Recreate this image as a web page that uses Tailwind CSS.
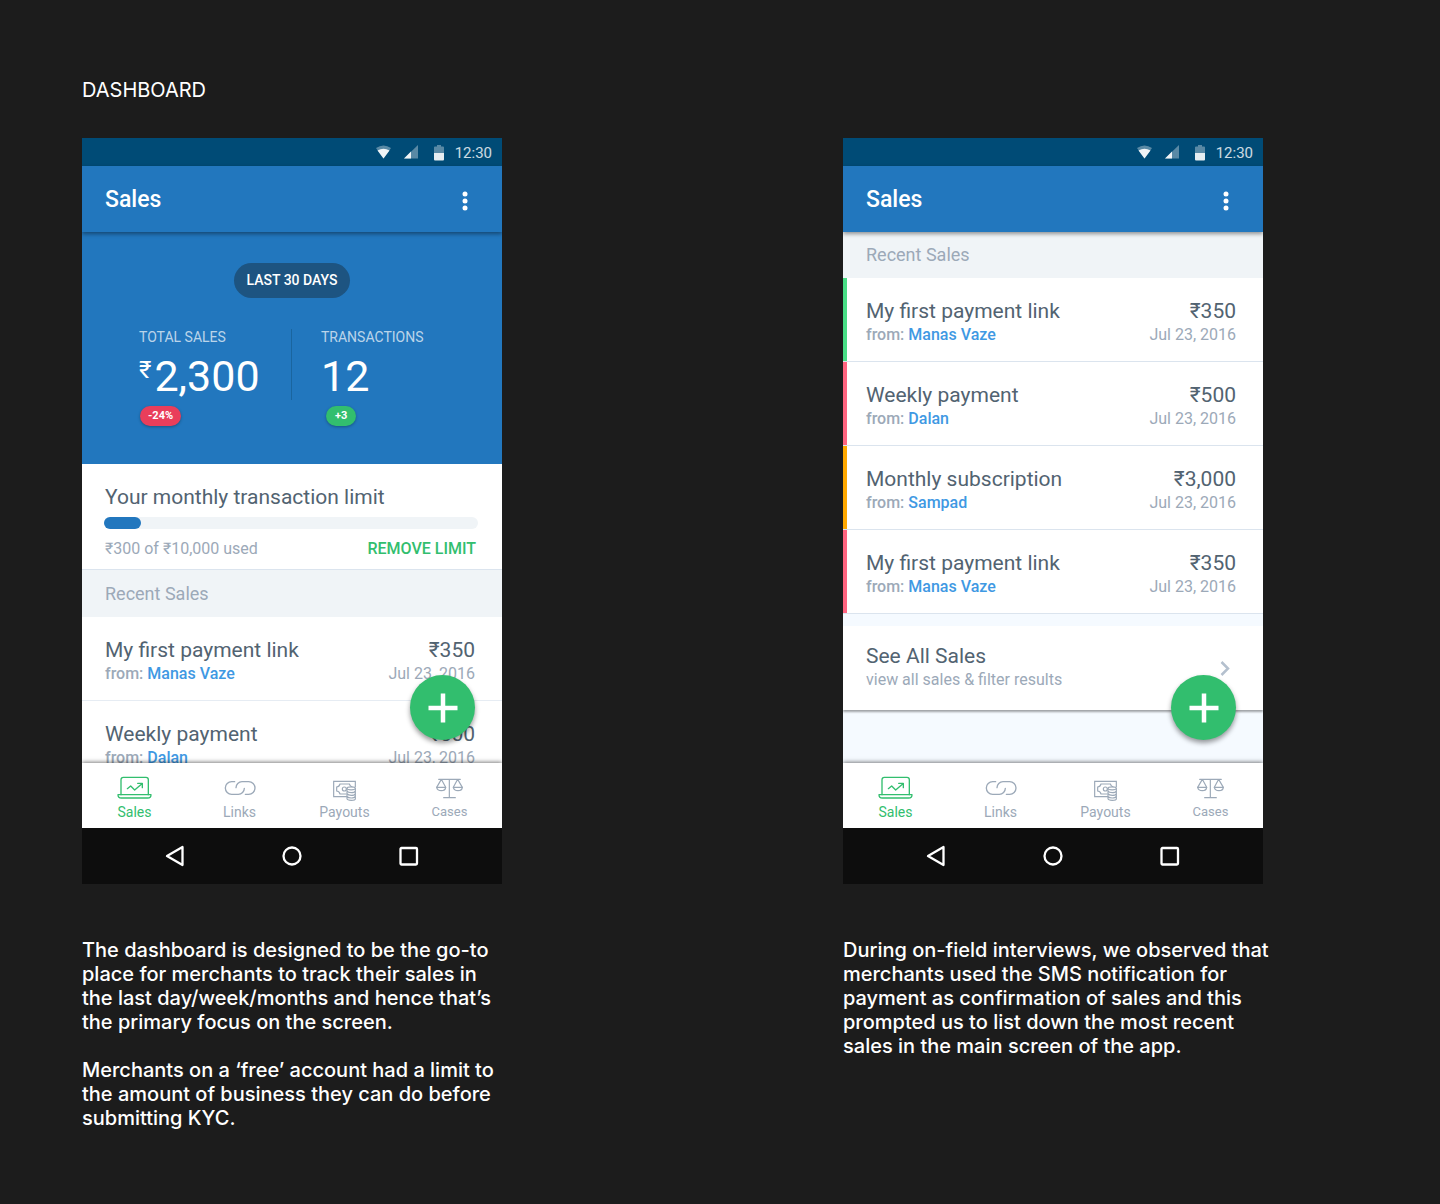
<!DOCTYPE html>
<html lang="en">
<head>
<meta charset="utf-8">
<meta name="viewport" content="width=device-width, initial-scale=1">
<title>Dashboard</title>
<script src="https://cdn.jsdelivr.net/npm/@tailwindcss/browser@4"></script>
</head>
<body class="min-h-screen bg-[#1c1c1c] font-['Inter',sans-serif] text-xl leading-6 text-white">

<svg class="hidden" aria-hidden="true">
  <symbol id="status" viewBox="0 0 60 20">
    <path d="M2 5Q9.500 0 17 5L9.500 15.500Z" fill="#fff" opacity=".35"/>
    <path d="M3.500 7.500Q9.500 4 15.500 7.500L9.500 15.500Z" fill="#fff" opacity=".9"/>
    <path d="M44 2V15.500H30Z" fill="#fff" opacity=".35"/>
    <path d="M37 8.500V15.500H30Z" fill="#fff" opacity=".9"/>
  </symbol>
  <symbol id="battery" viewBox="0 0 10 16">
    <path d="M0 8V2.500Q0 1.500 1 1.500H3V0H7V1.500H9Q10 1.500 10 2.500V8Z" fill="#fff" opacity=".35"/>
    <path d="M0 8H10V14.500Q10 15.500 9 15.500H1Q0 15.500 0 14.500Z" fill="#fff" opacity=".9"/>
  </symbol>
  <symbol id="dots" viewBox="0 0 6 20">
    <circle cx="3" cy="3" r="2.500" fill="#fff"/><circle cx="3" cy="10" r="2.500" fill="#fff"/><circle cx="3" cy="17" r="2.500" fill="#fff"/>
  </symbol>
  <symbol id="plus" viewBox="0 0 30 30"><path d="M15 0.500V29.500M.5 15H29.500" stroke="#fff" stroke-width="4.500"/></symbol>
  <symbol id="sales" viewBox="105 60 105 78">
    <g fill="none" stroke="currentColor" stroke-width="4" stroke-linejoin="round" stroke-linecap="round">
      <path d="M117 119V74Q117 67 124 67H192Q199 67 199 74V119"/>
      <path d="M108 119H207Q207 129 197 129H118Q108 129 108 119Z"/>
      <path d="M136 101L146 93L158 105L180 86M167 85H181V98"/>
    </g>
  </symbol>
  <symbol id="links" viewBox="420 60 105 78">
    <g fill="none" stroke="currentColor" stroke-width="4" stroke-linecap="round">
      <path d="M458 80H449A19 19 0 0 0 449 118H469A18 18 0 0 0 487 100"/>
      <path d="M490 118H500A19 19 0 0 0 500 80H480A18 18 0 0 0 462 98"/>
    </g>
  </symbol>
  <symbol id="payouts" viewBox="105 60 105 78">
    <g fill="none" stroke="currentColor" stroke-width="3.500">
      <path d="M165 125H125V79H190V97"/>
      <path d="M164 117H144Q142 109 134 108V96Q142 95 144 87H172Q174 94 181 96"/>
      <circle cx="157" cy="102" r="6"/>
      <path d="M165 100V131Q166 136 178 136T190 131V100M165 108Q168 113 178 113T190 108M165 116Q168 121 178 121T190 116M165 124Q168 129 178 129T190 124"/>
      <ellipse cx="177.500" cy="100" rx="12.500" ry="4.500"/>
    </g>
  </symbol>
  <symbol id="cases" viewBox="420 60 105 78">
    <g fill="none" stroke="currentColor" stroke-width="3.500" stroke-linejoin="round" stroke-linecap="round">
      <path d="M440 73H505M472 73V128M455 128H490M448 73L434 97M448 73L461 97M497 73L484 97M497 73L511 97"/>
      <path d="M434 97H461Q460 107 448 107T434 97ZM484 97H511Q510 107 498 107T484 97Z"/>
    </g>
  </symbol>
  <symbol id="back" viewBox="0 0 20 22"><path d="M17.500 2V20L2 11Z" fill="none" stroke="#fff" stroke-width="2.300" stroke-linejoin="round"/></symbol>
  <symbol id="home" viewBox="0 0 20 20"><circle cx="10" cy="10" r="8.500" fill="none" stroke="#fff" stroke-width="2.300"/></symbol>
  <symbol id="recent" viewBox="0 0 20 20"><rect x="1.500" y="2" width="16.500" height="16.500" rx="1" fill="none" stroke="#fff" stroke-width="2.300"/></symbol>
</svg>

<main class="px-[82px] pt-[78px] pb-[74px]">
  <h1>DASHBOARD</h1>

  <div class="mt-9 grid grid-cols-2 gap-[246px]">

    <section>
      <div class="w-full max-w-[420px] overflow-hidden font-['Roboto',sans-serif]">
        <div class="flex h-7 items-center justify-end bg-[#004b76] pt-px pr-[10px] text-[15px] text-white/80">
          <svg class="h-5 w-[60px]"><use href="#status"/></svg>
          <svg class="mr-[11px] h-4 w-[10px]"><use href="#battery"/></svg>
          12:30
        </div>
        <header class="relative z-10 flex h-[66px] items-center justify-between bg-[#2277be] pr-[34px] pl-[23px] shadow-[0_2px_4px_rgba(0,0,0,0.4)]">
          <h2 class="pt-0.5 text-[23px] font-medium">Sales</h2>
          <button type="button" aria-label="More options" class="pt-1"><svg class="h-5 w-[6px]"><use href="#dots"/></svg></button>
        </header>

        <div class="relative h-[531px] overflow-hidden bg-white">
          <div class="h-[232px] bg-[#2277be] pt-[31px]">
            <button type="button" class="mx-auto block h-[35px] rounded-full bg-[#1d5481] px-[13px] pb-px text-sm font-medium">LAST 30 DAYS</button>
            <div class="mt-[31px] grid grid-cols-2">
              <div class="border-r border-[#1a659f] pl-[57px]">
                <p class="text-sm leading-4 text-white/70">TOTAL SALES</p>
                <p class="mt-[7px] flex text-[43px] leading-[48px]"><span class="mr-[3px] text-2xl leading-9">₹</span>2,300</p>
              </div>
              <div class="pl-[29px]">
                <p class="text-sm leading-4 text-white/70">TRANSACTIONS</p>
                <p class="mt-[7px] text-[43px] leading-[48px]">12</p>
              </div>
            </div>
            <div class="mt-[6px] grid grid-cols-2 text-[11px] leading-5 font-bold">
              <div class="flex pl-[58px]"><span class="rounded-full bg-[#e93e5b] px-2 shadow-[0_1px_3px_rgba(0,0,0,0.3)]">-24%</span></div>
              <div class="flex pl-[34px]"><span class="rounded-full bg-[#32be6e] px-[9px] shadow-[0_1px_3px_rgba(0,0,0,0.3)]">+3</span></div>
            </div>
          </div>

          <div class="border-b border-[#dbe4ee] pt-[19px] pr-[26px] pb-2 pl-[23px]">
            <h3 class="text-[21px] leading-7 text-[#526371]">Your monthly transaction limit</h3>
            <div class="mt-[6px] -mr-0.5 -ml-px h-3 rounded-full bg-[#f0f4f7]" role="progressbar" aria-label="Monthly limit used" aria-valuenow="10">
              <div class="h-3 rounded-full bg-[#2277be]" style="width:10%"></div>
            </div>
            <div class="mt-2 flex justify-between text-base leading-6 text-[#9ca9b8]">
              <p>₹300 of ₹10,000 used</p>
              <a href="#" class="font-medium text-[#32be6e]">REMOVE LIMIT</a>
            </div>
          </div>

          <h3 class="flex h-[47px] items-center bg-[#f0f4f7] px-[23px] text-lg text-[#9ca9b8]">Recent Sales</h3>
          <ul>
            <li class="flex h-[84px] justify-between border-b border-[#e6ecf3] pt-[21px] pr-[27px] pl-[23px]">
              <div>
                <p class="text-[21px] leading-6 text-[#526371]">My first payment link</p>
                <p class="text-base leading-6 font-medium text-[#9ca9b8]">from: <a href="#" class="text-[#3f99e3]">Manas Vaze</a></p>
              </div>
              <div class="text-right">
                <p class="text-[21px] leading-6 text-[#526371]">₹350</p>
                <p class="text-base leading-6 text-[#9ca9b8]">Jul 23, 2016</p>
              </div>
            </li>
            <li class="flex h-[84px] justify-between pt-[21px] pr-[27px] pl-[23px]">
              <div>
                <p class="text-[21px] leading-6 text-[#526371]">Weekly payment</p>
                <p class="text-base leading-6 font-medium text-[#9ca9b8]">from: <a href="#" class="text-[#3f99e3]">Dalan</a></p>
              </div>
              <div class="text-right">
                <p class="text-[21px] leading-6 text-[#526371]">₹500</p>
                <p class="text-base leading-6 text-[#9ca9b8]">Jul 23, 2016</p>
              </div>
            </li>
          </ul>
          <button type="button" aria-label="Add sale" class="absolute right-[27px] bottom-[23px] flex size-[65px] items-center justify-center rounded-full bg-[#32be6e] shadow-[0_3px_5px_rgba(0,0,0,0.4)]"><svg class="size-[30px]"><use href="#plus"/></svg></button>
        </div>

        <nav class="relative grid h-[65px] grid-cols-4 bg-white pt-3 text-center text-sm leading-5 text-[#9ca9b8] shadow-[0_-1px_4px_rgba(0,0,0,0.5)]">
          <a href="#" class="text-[#32be6e]"><svg class="mx-auto mb-px h-[26px] w-[35px]"><use href="#sales"/></svg>Sales</a>
          <a href="#"><svg class="mx-auto mb-px h-[26px] w-[35px]"><use href="#links"/></svg>Links</a>
          <a href="#"><svg class="mx-auto mb-px h-[26px] w-[35px]"><use href="#payouts"/></svg>Payouts</a>
          <a href="#" class="text-[13px]"><svg class="mx-auto mb-px h-[26px] w-[35px]"><use href="#cases"/></svg>Cases</a>
        </nav>
        <div class="relative flex h-14 items-center justify-center gap-[97px] bg-[#0d0d0d]">
          <button type="button" aria-label="Back"><svg class="h-[22px] w-5"><use href="#back"/></svg></button>
          <button type="button" aria-label="Home"><svg class="size-5"><use href="#home"/></svg></button>
          <button type="button" aria-label="Recent apps"><svg class="size-5"><use href="#recent"/></svg></button>
        </div>
      </div>

      <div class="mt-[54px] max-w-[430px] space-y-6 font-medium">
        <p>The dashboard is designed to be the go-to place for merchants to track their sales in the last day/week/months and hence that’s the primary focus on the screen.</p>
        <p>Merchants on a ‘free’ account had a limit to the amount of business they can do before submitting KYC.</p>
      </div>
    </section>

    <section>
      <div class="w-full max-w-[420px] overflow-hidden font-['Roboto',sans-serif]">
        <div class="flex h-7 items-center justify-end bg-[#004b76] pt-px pr-[10px] text-[15px] text-white/80">
          <svg class="h-5 w-[60px]"><use href="#status"/></svg>
          <svg class="mr-[11px] h-4 w-[10px]"><use href="#battery"/></svg>
          12:30
        </div>
        <header class="relative z-10 flex h-[66px] items-center justify-between bg-[#2277be] pr-[34px] pl-[23px] shadow-[0_2px_4px_rgba(0,0,0,0.4)]">
          <h2 class="pt-0.5 text-[23px] font-medium">Sales</h2>
          <button type="button" aria-label="More options" class="pt-1"><svg class="h-5 w-[6px]"><use href="#dots"/></svg></button>
        </header>

        <div class="relative h-[531px] overflow-hidden bg-[#f5faff]">
          <h3 class="flex h-[46px] items-center bg-[#f0f4f7] px-[23px] text-lg text-[#9ca9b8]">Recent Sales</h3>
          <ul>
            <li class="flex h-[84px] border-b border-[#dbe4ee] bg-white">
              <span class="w-1 bg-[#49de86]"></span>
              <div class="flex grow justify-between pt-[21px] pr-[27px] pl-[19px]">
                <div>
                  <p class="text-[21px] leading-6 text-[#526371]">My first payment link</p>
                  <p class="text-base leading-6 font-medium text-[#9ca9b8]">from: <a href="#" class="text-[#3f99e3]">Manas Vaze</a></p>
                </div>
                <div class="text-right">
                  <p class="text-[21px] leading-6 text-[#526371]">₹350</p>
                  <p class="text-base leading-6 text-[#9ca9b8]">Jul 23, 2016</p>
                </div>
              </div>
            </li>
            <li class="flex h-[84px] border-b border-[#dbe4ee] bg-white">
              <span class="w-1 bg-[#ff6480]"></span>
              <div class="flex grow justify-between pt-[21px] pr-[27px] pl-[19px]">
                <div>
                  <p class="text-[21px] leading-6 text-[#526371]">Weekly payment</p>
                  <p class="text-base leading-6 font-medium text-[#9ca9b8]">from: <a href="#" class="text-[#3f99e3]">Dalan</a></p>
                </div>
                <div class="text-right">
                  <p class="text-[21px] leading-6 text-[#526371]">₹500</p>
                  <p class="text-base leading-6 text-[#9ca9b8]">Jul 23, 2016</p>
                </div>
              </div>
            </li>
            <li class="flex h-[84px] border-b border-[#dbe4ee] bg-white">
              <span class="w-1 bg-[#ffa800]"></span>
              <div class="flex grow justify-between pt-[21px] pr-[27px] pl-[19px]">
                <div>
                  <p class="text-[21px] leading-6 text-[#526371]">Monthly subscription</p>
                  <p class="text-base leading-6 font-medium text-[#9ca9b8]">from: <a href="#" class="text-[#3f99e3]">Sampad</a></p>
                </div>
                <div class="text-right">
                  <p class="text-[21px] leading-6 text-[#526371]">₹3,000</p>
                  <p class="text-base leading-6 text-[#9ca9b8]">Jul 23, 2016</p>
                </div>
              </div>
            </li>
            <li class="flex h-[84px] border-b border-[#dbe4ee] bg-white">
              <span class="w-1 bg-[#ff6480]"></span>
              <div class="flex grow justify-between pt-[21px] pr-[27px] pl-[19px]">
                <div>
                  <p class="text-[21px] leading-6 text-[#526371]">My first payment link</p>
                  <p class="text-base leading-6 font-medium text-[#9ca9b8]">from: <a href="#" class="text-[#3f99e3]">Manas Vaze</a></p>
                </div>
                <div class="text-right">
                  <p class="text-[21px] leading-6 text-[#526371]">₹350</p>
                  <p class="text-base leading-6 text-[#9ca9b8]">Jul 23, 2016</p>
                </div>
              </div>
            </li>
          </ul>
          <a href="#" class="mt-3 flex h-[84px] items-center justify-between bg-white pr-[33px] pl-[23px] shadow-[0_2px_2px_rgba(0,0,0,0.35)]">
            <span>
              <span class="block text-[21px] leading-6 text-[#526371]">See All Sales</span>
              <span class="block text-base leading-6 text-[#9ca9b8]">view all sales &amp; filter results</span>
            </span>
            <svg class="h-4 w-[10px]" viewBox="0 0 10 16" fill="none" stroke="#b4c0ce" stroke-width="2.500"><path d="M1.500 2L8 8.500L1.500 15"/></svg>
          </a>
          <button type="button" aria-label="Add sale" class="absolute right-[27px] bottom-[23px] flex size-[65px] items-center justify-center rounded-full bg-[#32be6e] shadow-[0_3px_5px_rgba(0,0,0,0.4)]"><svg class="size-[30px]"><use href="#plus"/></svg></button>
        </div>

        <nav class="relative grid h-[65px] grid-cols-4 bg-white pt-3 text-center text-sm leading-5 text-[#9ca9b8] shadow-[0_-1px_4px_rgba(0,0,0,0.5)]">
          <a href="#" class="text-[#32be6e]"><svg class="mx-auto mb-px h-[26px] w-[35px]"><use href="#sales"/></svg>Sales</a>
          <a href="#"><svg class="mx-auto mb-px h-[26px] w-[35px]"><use href="#links"/></svg>Links</a>
          <a href="#"><svg class="mx-auto mb-px h-[26px] w-[35px]"><use href="#payouts"/></svg>Payouts</a>
          <a href="#" class="text-[13px]"><svg class="mx-auto mb-px h-[26px] w-[35px]"><use href="#cases"/></svg>Cases</a>
        </nav>
        <div class="relative flex h-14 items-center justify-center gap-[97px] bg-[#0d0d0d]">
          <button type="button" aria-label="Back"><svg class="h-[22px] w-5"><use href="#back"/></svg></button>
          <button type="button" aria-label="Home"><svg class="size-5"><use href="#home"/></svg></button>
          <button type="button" aria-label="Recent apps"><svg class="size-5"><use href="#recent"/></svg></button>
        </div>
      </div>

      <p class="mt-[54px] max-w-[430px] font-medium">During on-field interviews, we observed that merchants used the SMS notification for payment as confirmation of sales and this prompted us to list down the most recent sales in the main screen of the app.</p>
    </section>
  </div>
</main>
</body>
</html>
